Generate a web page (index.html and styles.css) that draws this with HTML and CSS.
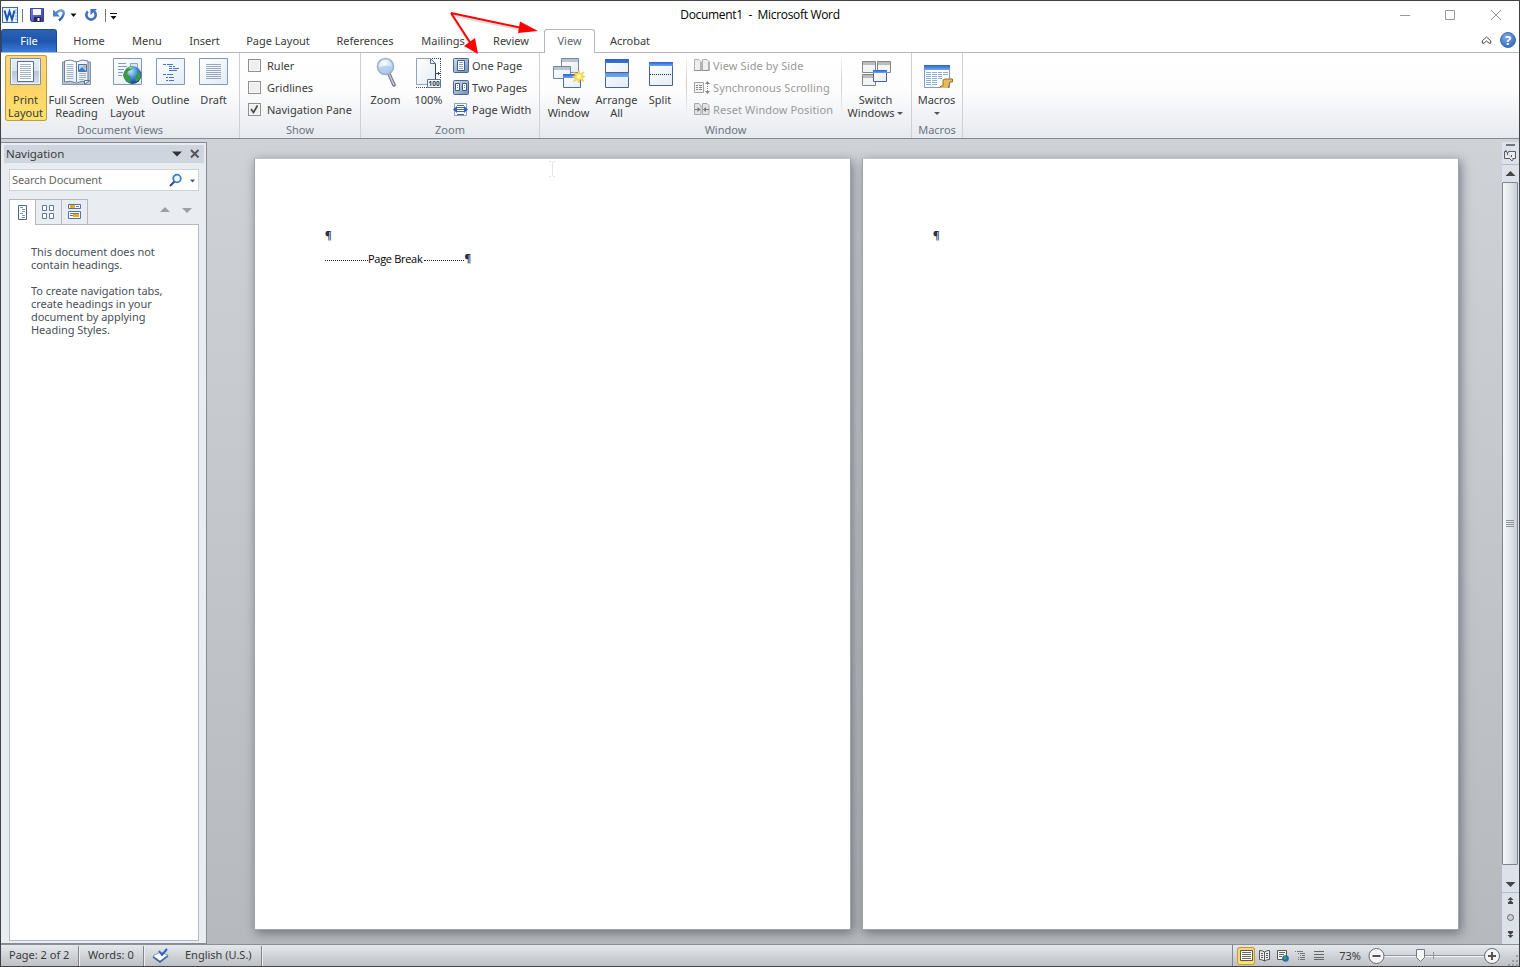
FILE: index.html
```html
<!DOCTYPE html>
<html lang="en">
<head>
    <meta charset="UTF-8">
    <title>Document1 - Microsoft Word</title>
    <link rel="stylesheet" href="styles.css">
</head>
<body>
    <!-- Shared gradients -->
    <svg class="defs" width="0" height="0">
        <defs>
            <linearGradient id="paper" x1="0" y1="0" x2="1" y2="1"><stop offset="0" stop-color="#fff"/><stop offset="1" stop-color="#e3ebf5"/></linearGradient>
            <linearGradient id="blueBar" x1="0" y1="0" x2="0" y2="1"><stop offset="0" stop-color="#2a62c8"/><stop offset="1" stop-color="#6ca4f8"/></linearGradient>
            <linearGradient id="steel" x1="0" y1="0" x2="1" y2="1"><stop offset="0" stop-color="#d3e0f0"/><stop offset="1" stop-color="#6f8fba"/></linearGradient>
            <linearGradient id="side" x1="0" y1="0" x2="0" y2="1"><stop offset="0" stop-color="#e6edf5"/><stop offset=".5" stop-color="#dae3ee"/><stop offset=".5" stop-color="#b9c7d9"/><stop offset="1" stop-color="#d5dfeb"/></linearGradient>
            <linearGradient id="arrowBlue" x1="0" y1="0" x2="0" y2="1"><stop offset="0" stop-color="#6a9be0"/><stop offset="1" stop-color="#2456ae"/></linearGradient>
            <linearGradient id="floppy" x1="0" y1="0" x2="1" y2="1"><stop offset="0" stop-color="#7b86e0"/><stop offset="1" stop-color="#3038a0"/></linearGradient>
            <radialGradient id="globe" cx=".4" cy=".3" r=".7"><stop offset="0" stop-color="#b9e0ff"/><stop offset=".5" stop-color="#4b8fe0"/><stop offset="1" stop-color="#153f8e"/></radialGradient>
            <radialGradient id="lens" cx=".4" cy=".3" r=".7"><stop offset="0" stop-color="#fff"/><stop offset="1" stop-color="#a9cdf0"/></radialGradient>
            <radialGradient id="help" cx=".4" cy=".3" r=".8"><stop offset="0" stop-color="#7fa9e6"/><stop offset="1" stop-color="#2d62b8"/></radialGradient>
        </defs>
    </svg>

    <div class="window">
        <!-- Title bar -->
        <header class="titlebar">
            <div class="quick-access">
                <svg width="120" height="28" viewBox="0 0 120 28">
                    <rect x="1.500" y="6.500" width="15" height="15" fill="#e9f1fb" stroke="#3c6cb0"/>
                    <path d="M14 9h2M14 12h2M14 15h2M14 18h2" stroke="#8aa9d5"/>
                    <path d="M3.500 9.500L6 18.500 8.500 10.500 11 18.500 13.500 9.500" fill="none" stroke="#1b57ab" stroke-width="2"/>
                    <path d="M21.500 8v13M104.500 8v13" stroke="#777"/>
                    <path d="M29.500 7.500h13v13h-12l-1-1z" fill="url(#floppy)" stroke="#3b439f"/>
                    <path d="M32 8h8v6h-8z" fill="#f3f6ff"/><path d="M33 16h7v5h-7z" fill="#23285c"/><path d="M36.500 17h2v3h-2z" fill="#fff"/>
                    <path d="M55 12.500C58 8 64 8.500 62.500 13.500c-.8 3-2.500 4.500-4.500 6" fill="none" stroke="url(#arrowBlue)" stroke-width="2.400"/>
                    <path d="M52 8.500v7h7z" fill="#4a7fd0"/>
                    <path d="M69.500 12.500h6l-3 3.500z" fill="#111"/>
                    <path d="M86.800 10.500a4.700 4.700 0 1 0 6.500 0" fill="none" stroke="#3c6fc4" stroke-width="2.600"/>
                    <path d="M89.500 8h6.500l-6.500 6z" fill="#3c6fc4"/>
                    <path d="M109 12.500h7" stroke="#111"/><path d="M109.500 15h6l-3 3.500z" fill="#111"/>
                </svg>
            </div>
            <div class="title">Document1&nbsp; -&nbsp; Microsoft Word</div>
            <svg class="window-buttons" width="119" height="28" viewBox="0 0 119 28">
                <path d="M0 14.500h10M45.500 9.500h9v9h-9zM91 9l10 10M101 9l-10 10" fill="none" stroke="#999"/>
            </svg>
        </header>

        <!-- Ribbon tabs -->
        <nav class="tabs">
            <div class="tab file">File</div>
            <div class="tab home">Home</div>
            <div class="tab menu">Menu</div>
            <div class="tab insert">Insert</div>
            <div class="tab layout">Page Layout</div>
            <div class="tab references">References</div>
            <div class="tab mailings">Mailings</div>
            <div class="tab review">Review</div>
            <div class="tab active">View</div>
            <div class="tab acrobat">Acrobat</div>
            <svg class="ribbon-help" width="38" height="20" viewBox="0 0 38 20">
                <path d="M1.300 11.800L5.500 8l4.200 3.800v2.400H8L5.500 12 3 14.200H1.300z" fill="#fff" stroke="#444c58"/>
                <circle cx="27" cy="11" r="7.500" fill="url(#help)" stroke="#3c6fbe"/>
                <text x="27" y="15.500" text-anchor="middle" class="help-mark">?</text>
            </svg>
        </nav>

        <!-- Ribbon -->
        <section class="ribbon">
            <div class="group views">
                <div class="group-body">
                    <div class="big selected w42">
                        <svg width="32" height="32" viewBox="0 0 32 32">
                            <path d="M.5 2.500h30v26H.5z" fill="url(#side)" stroke="#7a91b0"/>
                            <path d="M1.500 3.500h28v24h-28z" fill="none" stroke="#f4f8fc"/>
                            <path d="M7.500 5.500h16v20h-16z" fill="#fff" stroke="#55708f"/>
                            <path d="M10 8.500h11M10 10.500h11M10 12.500h11M10 14.500h11M10 16.500h11M10 18.500h11M10 20.500h11M10 22.500h11" stroke="#a3b3c8"/>
                        </svg>
                        <span>Print<br>Layout</span>
                    </div>
                    <div class="big w60">
                        <svg width="32" height="32" viewBox="0 0 32 32">
                            <path d="M1.500 6v22.500h28V6z" fill="#b7c6d8" stroke="#8093ab"/>
                            <path d="M3.500 5q6-2.500 12 1 5.500-3.500 11.500-1v21q-6-2-11.500 1-6-3-12-1z" fill="url(#paper)" stroke="#6b7f99"/>
                            <path d="M15.500 6v20" stroke="#6b7f99"/>
                            <path d="M5.500 8.500h7M5.500 10.500h7M5.500 12.500h7M5.500 14.500h7M5.500 16.500h7M5.500 18.500h7M5.500 20.500h7M5.500 22.500h7M18 17.500h7M18 19.500h7M18 21.500h7M18 23.500h5" stroke="#a3b1c4"/>
                            <path d="M17.500 8.500h8v7h-8z" fill="#b7d8f6" stroke="#4774b4"/><path d="M18 14l3-3 4 4h-7z" fill="#3d79c8"/><circle cx="23.500" cy="10.800" r="1.400" fill="#f7a343"/>
                            <path d="M23.500 28.500v-4h5z" fill="#fff" stroke="#60748d"/>
                        </svg>
                        <span>Full Screen<br>Reading</span>
                    </div>
                    <div class="big w42">
                        <svg width="32" height="32" viewBox="0 0 32 32">
                            <path d="M1.500 2.500h28v26h-28z" fill="url(#paper)" stroke="#8298b5"/>
                            <path d="M6 7.500h8M6 10.500h9M6 13.500h6M6 16.500h5M6 19.500h4" stroke="#7b9fd0"/><path d="M18.500 7.500h7v6h-7z" fill="#d8e6f8" stroke="#8aa6cc"/>
                            <circle cx="20.500" cy="19" r="9" fill="url(#globe)"/>
                            <path d="M14 13q4-4 7-2l-2 3-3 1-1 3 4 3-1 6q-6-2-7-8zM25 14l3 3q2 4-1 7l-3 2-1-4 2-3z" fill="#3a9a3f"/>
                            <path d="M16 12q2-2 5-1l-2 2z" fill="#8fd174"/>
                        </svg>
                        <span>Web<br>Layout</span>
                    </div>
                    <div class="big outline w46">
                        <svg width="32" height="32" viewBox="0 0 32 32">
                            <path d="M1.500 2.500h28v26h-28z" fill="url(#paper)" stroke="#8298b5"/>
                            <path d="M8 8.500h3M12 8.500h6M14 10.500h3M18 10.500h2M14 12.500h3M18 12.500h6M14 14.500h8M8 18.500h3M12 18.500h6M11 21.500h2M14 21.500h5M11 24.500h2M14 24.500h5" stroke="#4876b8"/>
                        </svg>
                        <span>Outline</span>
                    </div>
                    <div class="big w40">
                        <svg width="32" height="32" viewBox="0 0 32 32">
                            <path d="M1.500 2.500h28v26h-28z" fill="url(#paper)" stroke="#8298b5"/>
                            <path d="M8 8.500h15M8 10.500h15M8 12.500h15M8 14.500h15M8 16.500h15M8 18.500h15M8 20.500h15M8 22.500h15" stroke="#9aa8bd"/>
                        </svg>
                        <span>Draft</span>
                    </div>
                </div>
                <div class="group-title">Document Views</div>
            </div>

            <div class="group show">
                <div class="group-body stack">
                    <div class="small"><i class="check"></i>Ruler</div>
                    <div class="small"><i class="check"></i>Gridlines</div>
                    <div class="small"><i class="check"><svg width="11" height="11" viewBox="0 0 11 11"><path d="M2 5l2.500 3.500L8.500 1.500" fill="none" stroke="#454545" stroke-width="1.600"/></svg></i>Navigation Pane</div>
                </div>
                <div class="group-title">Show</div>
            </div>

            <div class="group zoom">
                <div class="group-body">
                    <div class="big w46">
                        <svg width="32" height="32" viewBox="0 0 32 32">
                            <path d="M19 18l5 11" stroke="#747a83" stroke-width="3.600" stroke-linecap="round"/><path d="M19 18l5 11" stroke="#c4cad2" stroke-width="1.500"/>
                            <circle cx="15.500" cy="10.500" r="8" fill="url(#lens)" stroke="#9fb0c5" stroke-width="1.600"/>
                            <path d="M9 12q6-4 13-1-1 6-6.500 6T9 12z" fill="#9cc4ee" opacity=".6"/>
                        </svg>
                        <span>Zoom</span>
                    </div>
                    <div class="big hundred w40">
                        <svg width="32" height="32" viewBox="0 0 32 32">
                            <path d="M20 2.500h9M28.500 3v20M4 31.500h12" fill="none" stroke="#344863" stroke-dasharray="1 1"/>
                            <path d="M4.500 2.500h14l5 5v21h-19z" fill="url(#paper)" stroke="#8da5c2"/><path d="M18.500 2.500v5h5z" fill="#e8eff7" stroke="#5a7190"/>
                            <path d="M23.500 8v15M24 17.500h4M26.500 16v3" stroke="#344863"/>
                            <path d="M15.500 23.500h13v8h-13z" fill="#f3f6fa" stroke="#60758f"/><text x="22.200" y="30" text-anchor="middle" class="tiny">100</text>
                        </svg>
                        <span>100%</span>
                    </div>
                    <div class="stack smalls">
                        <div class="small"><svg width="16" height="16" viewBox="0 0 16 16"><rect x=".5" y=".5" width="15" height="14" rx="1" fill="url(#steel)" stroke="#476792"/><path d="M4.500 2.500h7v10h-7z" fill="#fff" stroke="#405b80"/><path d="M6 4.500h4M6 6.500h4M6 8.500h4M6 10.500h4" stroke="#8ba1c0"/></svg>One Page</div>
                        <div class="small"><svg width="16" height="16" viewBox="0 0 16 16"><rect x=".5" y=".5" width="15" height="14" rx="1" fill="url(#steel)" stroke="#476792"/><path d="M2.500 3.500h4v7h-4zM9.500 3.500h4v7h-4z" fill="#fff" stroke="#405b80"/><path d="M4 5.500h1M4 7.500h1M11 5.500h1M11 7.500h1" stroke="#6d87ab"/></svg>Two Pages</div>
                        <div class="small"><svg width="16" height="16" viewBox="0 0 16 16"><path d="M1.500 1.500h12v12h-12z" fill="#f5f8fc" stroke="#8da0ba"/><path d="M4 3.500h7M4 12.500h7" stroke="#51688a"/><path d="M4 5.500h7M4 7.500h7M4 9.500h7" stroke="#51688a"/><path d="M0 7.500L4 4v7zM15 7.500L11 4v7z" fill="#2e64c0"/></svg>Page Width</div>
                    </div>
                </div>
                <div class="group-title">Zoom</div>
            </div>

            <div class="group win">
                <div class="group-body">
                    <div class="big w50">
                        <svg width="32" height="32" viewBox="0 0 32 32">
                            <path d="M8.500 2.500h17v14h-17z" fill="url(#paper)" stroke="#7486a0"/><path d="M9 3h16v3H9z" fill="#b7c2d3"/>
                            <path d="M.5 10.500h17v12H.5z" fill="url(#paper)" stroke="#7486a0"/><path d="M1 11h16v3H1z" fill="#b7c2d3"/>
                            <path d="M10.500 18.500h17v13h-17z" fill="url(#paper)" stroke="#526c93"/><path d="M10 18h18v4H10z" fill="url(#blueBar)"/>
                            <path d="M26 14l1 4 4-2-2 3.500 3 1-3 1.500 2 3.500-4-2-1 3.500-1.500-3.500-4 2 2-3.500-3.500-1.500 3.500-1-2-3.500 4 2z" fill="#ffe14a" stroke="#f1bb35" stroke-width=".6"/><circle cx="26" cy="20.500" r="2" fill="#fffbd8"/>
                        </svg>
                        <span>New<br>Window</span>
                    </div>
                    <div class="big w46">
                        <svg width="32" height="32" viewBox="0 0 32 32">
                            <path d="M4.500 3.500h23v28h-23z" fill="url(#paper)" stroke="#4b6386"/><path d="M4 16.500h24" stroke="#4b6386"/>
                            <path d="M4 3h24v4H4zM4 17h24v4H4z" fill="url(#blueBar)"/>
                        </svg>
                        <span>Arrange<br>All</span>
                    </div>
                    <div class="big split w43">
                        <svg width="32" height="32" viewBox="0 0 32 32">
                            <path d="M4.500 6.500h23v23h-23z" fill="url(#paper)" stroke="#4b6386"/><path d="M4 6h24v4H4z" fill="url(#blueBar)"/>
                            <path d="M5 18.500h22" stroke="#222c3a" stroke-dasharray="1 1"/>
                        </svg>
                        <span>Split</span>
                    </div>
                    <div class="divider"></div>
                    <div class="stack smalls disabled">
                        <div class="small"><svg width="16" height="16" viewBox="0 0 16 16"><path d="M.5 1.500H5l2 2v9H.5zM8.500 1.500H13l2 2v9H8.500z" fill="#eee" stroke="#b0b0b0"/><path d="M7 4v9M15 4v9M0 12.500h7M8 12.500h7" stroke="#8f8f8f"/></svg>View Side by Side</div>
                        <div class="small"><svg width="16" height="16" viewBox="0 0 16 16"><path d="M.5 2.500h9v10h-9z" fill="#f1f1f1" stroke="#a3a3a3"/><path d="M2 5.500h2M5 5.500h3M2 7.500h2M5 7.500h3M2 9.500h2M5 9.500h3" stroke="#888"/><path d="M13.500 4v8" stroke="#888" stroke-dasharray="1 1"/><path d="M11 4l2.500-3L16 4zM11 11l2.500 3 2.500-3z" fill="#888"/></svg>Synchronous Scrolling</div>
                        <div class="small"><svg width="16" height="16" viewBox="0 0 16 16"><path d="M.5 1.500H5l2 2v9H.5zM8.500 1.500H13l2 2v9H8.500z" fill="#e4e4e4" stroke="#a8a8a8"/><path d="M1 7.500h5M10 7.500h5" stroke="#777"/><path d="M3.500 5l3 2.500-3 2.500zM12 5L9 7.500l3 2.500z" fill="#777"/></svg>Reset Window Position</div>
                    </div>
                    <div class="divider second"></div>
                    <div class="big w68">
                        <svg width="32" height="32" viewBox="0 0 32 32">
                            <path d="M2.500 5.500h13v11h-13zM17.500 5.500h13v11h-13zM2.500 18.500h13v11h-13z" fill="#f3f4f5" stroke="#858585"/>
                            <path d="M3 6h12v3H3zM18 6h12v3H18zM3 19h12v3H3z" fill="#bbb"/>
                            <path d="M13.500 14.500h13v11h-13z" fill="url(#paper)" stroke="#4b6386"/><path d="M13 14h14v3H13z" fill="url(#blueBar)"/>
                        </svg>
                        <span>Switch<br>Windows <b class="caret"></b></span>
                    </div>
                </div>
                <div class="group-title">Window</div>
            </div>

            <div class="group macros">
                <div class="group-body">
                    <div class="big w46">
                        <svg width="32" height="32" viewBox="0 0 32 32">
                            <path d="M3.500 9.500h25v22h-25z" fill="#fff" stroke="#7d9cc9"/><path d="M3 9h26v5H3z" fill="url(#blueBar)"/>
                            <path d="M5 16.500h5M11 16.500h5M17 16.500h4M22 16.500h5M5 18.500h5M11 18.500h5M17 18.500h4M22 18.500h5M5 20.500h5M11 20.500h5M17 20.500h4M5 22.500h5M11 22.500h5M17 22.500h4M5 24.500h5M11 24.500h5M5 26.500h5M11 26.500h5M5 28.500h5M11 28.500h5" stroke="#8cadda"/>
                            <path d="M22 25q0-2 2-2h7.500v3h-2.500l-2 7h-8q-1-2 1-3h2z" fill="#e6b95a" stroke="#94712b"/>
                        </svg>
                        <span>Macros<br><b class="caret"></b></span>
                    </div>
                </div>
                <div class="group-title">Macros</div>
            </div>
        </section>

        <!-- Work area -->
        <main class="workspace">
            <aside class="navigation">
                <div class="nav-title">
                    <span>Navigation</span>
                    <svg width="31" height="18" viewBox="0 0 31 18"><path d="M1 6.500h10l-5 5z" fill="#333"/><path d="M20 5l7.500 7.500M27.500 5L20 12.500" stroke="#555" stroke-width="2"/></svg>
                </div>
                <div class="search">
                    <span>Search Document</span>
                    <svg width="30" height="19" viewBox="0 0 30 19"><path d="M2 15l5-5" stroke="#2c4d94" stroke-width="2.200"/><circle cx="9" cy="7.500" r="3.800" fill="#eff8ff" stroke="#3980c8" stroke-width="1.800"/><path d="M22 8.500h5l-2.500 3z" fill="#555"/></svg>
                </div>
                <div class="nav-tabs">
                    <div class="nav-tab current"><svg width="16" height="16" viewBox="0 0 16 16"><path d="M4.500 .5h8v14h-8z" fill="#fff" stroke="#4d678b"/><path d="M6 2.500h3M8 4.500h3M8 6.500h3M6 8.500h3M8 10.500h3M8 12.500h3" stroke="#8095b3"/></svg></div>
                    <div class="nav-tab"><svg width="16" height="16" viewBox="0 0 16 16"><path d="M2.500 1.500h4v5h-4zM9.500 1.500h4v5h-4zM2.500 9.500h4v5h-4zM9.500 9.500h4v5h-4z" fill="#fff" stroke="#5f779b"/></svg></div>
                    <div class="nav-tab"><svg width="16" height="16" viewBox="0 0 16 16"><path d="M2.500 .5h12v4h-12zM2.500 7.500h12v7h-12z" fill="#fff" stroke="#5171a8"/><path d="M4 1h5v3H4zM7 10h6v3H7z" fill="#efaa16"/><path d="M10 2.500h3M4 9.500h9M4 11.500h3" stroke="#5c7ba7"/></svg></div>
                    <svg class="nav-arrows" width="34" height="12" viewBox="0 0 34 12"><path d="M1 8h10L6 3zM23 4h10l-5 5z" fill="#9da0a4"/></svg>
                </div>
                <div class="nav-panel">
                    <p>This document does not<br>contain headings.</p>
                    <p>To create navigation tabs,<br>create headings in your<br>document by applying<br>Heading Styles.</p>
                </div>
            </aside>

            <div class="pages">
                <article class="page">
                    <div class="para">¶</div>
                    <div class="para break"><i class="dots"></i><span>Page Break</span><i class="dots second"></i><span class="mark">¶</span></div>
                    <svg class="ibeam" width="7" height="16" viewBox="0 0 7 16"><path d="M0 .5h2M4 .5h2M3.500 1v14M0 15.500h2M4 15.500h2" stroke="#e6e6e6"/></svg>
                </article>
                <article class="page">
                    <div class="para">¶</div>
                </article>
            </div>

            <div class="scrollbar">
                <div class="ruler-toggle"><svg width="16" height="22" viewBox="0 0 16 22"><path d="M4 2h9v2H4z" fill="#70757d"/><path d="M2.500 9.500h2M6.500 9.500h7v7h-3M8 16.500H2.500v-7" fill="#eee9ed" stroke="#555b64"/><path d="M3.500 8l2 3 2-2M8 17l2 2 2-3M5.500 11v2M9.500 13v2" fill="none" stroke="#555b64"/></svg></div>
                <div class="sb-arrow"><svg width="16" height="16" viewBox="0 0 16 16"><path d="M3.500 11h10L8.500 6z" fill="#464646"/></svg></div>
                <div class="thumb"><i></i><i></i><i></i><i></i></div>
                <div class="sb-arrow down"><svg width="16" height="16" viewBox="0 0 16 16"><path d="M3.500 6h10l-5 5z" fill="#464646"/></svg></div>
                <div class="browse"><svg width="16" height="50" viewBox="0 0 16 50"><path d="M5.500 7l3-3 3 3zM5.500 10l3-3 3 3zM6 10h5v1H6zM5.500 39h6l-3 3zM5.500 42h6l-3 3zM6 38h5v1H6z" fill="#444"/><circle cx="8.500" cy="24.500" r="3" fill="#ced0d4" stroke="#666"/></svg></div>
            </div>
        </main>

        <!-- Status bar -->
        <footer class="status">
            <div class="cell page-no">Page: 2 of 2</div>
            <div class="cell words">Words: 0</div>
            <div class="cell proof"><svg width="18" height="17" viewBox="0 0 18 17"><path d="M1 9l7-4 8 3-8 6z" fill="#fff" stroke="#8a9cc0"/><path d="M1 10l7 5 8-6" fill="none" stroke="#3e62ac" stroke-width="1.500"/><path d="M7 4l3 4 5-6" fill="none" stroke="#2d61c8" stroke-width="2"/></svg></div>
            <div class="cell language">English (U.S.)</div>
            <div class="status-right">
                <div class="view selected"><svg width="13" height="13" viewBox="0 0 13 13"><path d="M.5 1.500h12v10H.5z" fill="#fff" stroke="#555"/><path d="M2 3.500h9M2 5.500h9M2 7.500h9M2 9.500h9" stroke="#666"/></svg></div>
                <div class="view"><svg width="13" height="13" viewBox="0 0 13 13"><path d="M1.500 1.500q3 0 5 1.500 2-1.500 5-1.500v9q-3 0-5 1.500-2-1.500-5-1.500z" fill="#eee" stroke="#555"/><path d="M6.500 3v9M3 4.500h2M3 6.500h2M3 8.500h2M8 4.500h2M8 6.500h2M8 8.500h2" stroke="#555"/></svg></div>
                <div class="view"><svg width="13" height="13" viewBox="0 0 13 13"><path d="M1.500 1.500h9v9h-9z" fill="#f5f5f5" stroke="#555"/><path d="M3 3.500h6M3 5.500h5M3 7.500h3" stroke="#666"/><circle cx="9.500" cy="9.500" r="3.300" fill="#276aa9"/><path d="M8 8l2-1v3l-2 1z" fill="#49a553"/></svg></div>
                <div class="view"><svg width="13" height="13" viewBox="0 0 13 13"><path d="M1 2.500h1M3 2.500h6M4 4.500h1M6 4.500h5M6 6.500h1M8 6.500h3M4 8.500h1M6 8.500h5M4 10.500h1M6 10.500h5" stroke="#777"/></svg></div>
                <div class="view"><svg width="13" height="13" viewBox="0 0 13 13"><path d="M2 2.500h10M2 5.500h10M2 8.500h10M2 10.500h10" stroke="#666"/></svg></div>
                <div class="percent">73%</div>
                <svg class="zoom-slider" width="151" height="22" viewBox="0 0 151 22">
                    <path d="M16 10.500h101" stroke="#9298a1"/><path d="M16 11.500h101" stroke="#f3f4f5"/><path d="M65.500 7v7" stroke="#9298a1"/>
                    <circle cx="8.500" cy="11" r="7.500" fill="#f4f4f5" stroke="#666c74"/><path d="M4.500 11h8" stroke="#555" stroke-width="2"/>
                    <path d="M48.500 4.500h8v8l-4 4-4-4z" fill="#f8f8f8" stroke="#737982"/>
                    <circle cx="124" cy="11" r="7.500" fill="#f4f4f5" stroke="#666c74"/><path d="M120 11h8M124 7v8" stroke="#555" stroke-width="2"/>
                    <path d="M148 10h2v2h-2zM144 15h2v2h-2zM148 15h2v2h-2zM140 19h2v2h-2zM144 19h2v2h-2zM148 19h2v2h-2z" fill="#989da4"/>
                </svg>
            </div>
        </footer>
    </div>

    <!-- Callout arrows drawn over the ribbon -->
    <svg class="callout" width="100" height="52" viewBox="0 0 100 52">
        <path d="M6 6l72 15M6 6l21 33" stroke="#777" stroke-width="3" opacity=".25"/>
        <path d="M5 4l71 15M5 4l22 34" fill="none" stroke="#f00" stroke-width="2"/>
        <path d="M74 12.500l18 9.500-20 2zM18 37l11-8 3 16z" fill="#f00"/>
    </svg>
</body>
</html>
```
FILE: styles.css
```css
body {
    margin: 0;
    background: #414043;
    font-family: "Noto Sans", "Open Sans", sans-serif;
    font-size: 11px;
    color: #3b3b3b;
    width: 1520px;
    height: 967px;
    overflow: hidden;
}
svg {
    display: block;
    flex: none;
}
.defs {
    position: absolute;
}
.window {
    box-sizing: border-box;
    height: 967px;
    padding: 1px;
    display: flex;
    flex-direction: column;
    white-space: nowrap;
}

/* Title bar */
.titlebar {
    height: 28px;
    background: #fff;
    display: flex;
    align-items: center;
}
.quick-access {
    width: 400px;
}
.title {
    flex: 1;
    text-align: center;
    font-family: "Open Sans", sans-serif;
    font-size: 12px;
    color: #000;
    letter-spacing: -0.32px;
    padding-bottom: 2px;
}
.window-buttons {
    margin-left: 281px;
}

/* Tabs */
.tabs {
    height: 24px;
    background: linear-gradient(#b3b8be, #b3b8be) bottom / 100% 1px no-repeat #fff;
    display: flex;
}
.tab {
    box-sizing: border-box;
    text-align: center;
    line-height: 24px;
    height: 24px;
}
.file {
    width: 56px;
    margin-right: 3px;
    height: 23px;
    color: #fff;
    background: linear-gradient(#2c62b5, #1f55ab 50%, #3a7bdc);
    border: 1px solid #1c4a97;
    border-bottom: 0;
    border-radius: 3px 3px 0 0;
    line-height: 22px;
}
.home, .menu {
    width: 58px;
}
.insert {
    width: 57px;
}
.layout {
    width: 90px;
}
.references {
    width: 84px;
}
.mailings {
    width: 72px;
}
.review {
    width: 64px;
}
.active {
    width: 51px;
    margin-left: 1px;
    border: 1px solid #b3b8be;
    border-bottom: 0;
    border-radius: 3px 3px 0 0;
    background: #fff;
    line-height: 22px;
    color: #5c6470;
}
.acrobat {
    width: 70px;
}
.ribbon-help {
    margin-left: auto;
}
.help-mark {
    font-size: 13px;
    font-weight: bold;
    fill: #fff;
}

/* Ribbon */
.ribbon {
    box-sizing: border-box;
    height: 86px;
    display: flex;
    background: linear-gradient(#fff, #fdfdfe 45%, #e6e9ee);
    border-bottom: 1px solid #868b93;
}
.group {
    box-sizing: border-box;
    display: flex;
    flex-direction: column;
    border-right: 1px solid #cdd1d7;
}
.group-body {
    height: 69px;
    display: flex;
    padding-top: 2px;
    box-sizing: border-box;
}
.group-title {
    line-height: 16px;
    text-align: center;
    color: #6c7482;
}
.views {
    width: 239px;
}
.views .group-body {
    padding-left: 4px;
}
.show {
    width: 121px;
}
.zoom {
    width: 179px;
}
.zoom .group-body {
    padding-left: 2px;
}
.win {
    width: 372px;
}
.win .group-body {
    padding-left: 4px;
}
.macros {
    width: 51px;
}
.macros .group-body {
    padding-left: 2px;
}
.big {
    box-sizing: border-box;
    height: 66px;
    display: flex;
    flex-direction: column;
    align-items: center;
    text-align: center;
    line-height: 13px;
    padding-top: 1px;
}
.big span {
    margin-top: 5px;
    padding-right: 1px;
}
.selected {
    background: linear-gradient(#fcd77a, #fdd365 50%, #ffe36f);
    box-shadow: inset 0 0 0 1px #c29b45;
    border-radius: 3px;
}
.outline, .split {
    margin-left: -1px;
}
.w40 { width: 40px; }
.w42 { width: 42px; }
.w43 { width: 43px; }
.w46 { width: 46px; }
.w50 { width: 50px; }
.w60 { width: 60px; }
.w68 { width: 68px; }
.hundred svg {
    margin-left: -2px;
}
.tiny {
    font-size: 6.5px;
    font-weight: bold;
    fill: #2b3b55;
}
.stack {
    display: flex;
    flex-direction: column;
}
.small {
    box-sizing: border-box;
    height: 22px;
    padding-bottom: 2px;
    display: flex;
    align-items: center;
    gap: 3px;
}
.small > svg {
    margin-top: 2px;
}
.show .small {
    gap: 6px;
    padding-left: 8px;
}
.smalls {
    padding-left: 4px;
}
.disabled {
    padding-left: 7px;
    width: 147px;
    color: #999;
    letter-spacing: 0.12px;
}
.check {
    box-sizing: border-box;
    width: 13px;
    height: 13px;
    border: 1px solid #8e8f8f;
    background: #eee;
    box-shadow: inset 0 0 0 1px #f8f8f8;
}
.divider {
    width: 1px;
    height: 60px;
    margin-left: 4px;
    background: linear-gradient(#f6f7f8, #ccd0d6, #f0f1f3);
}
.divider.second {
    margin-left: 0;
}
.caret {
    display: inline-block;
    border: 3px solid transparent;
    border-top-color: #555;
    border-bottom: 0;
    vertical-align: 2px;
}

/* Work area */
.workspace {
    height: 805px;
    display: flex;
    background: linear-gradient(#cfd2d7, #b6b9be);
}
.navigation {
    box-sizing: border-box;
    width: 206px;
    margin-top: 3px;
    padding: 2px 2px 2px 3px;
    background: #e9ecf1;
    border: 1px solid #868b93;
    border-left: 0;
}
.nav-title {
    height: 18px;
    display: flex;
    justify-content: space-between;
    align-items: center;
    padding: 0 2px;
    background: #ced5de;
    line-height: 18px;
    font-size: 11.5px;
    letter-spacing: -0.05px;
}
.search {
    box-sizing: border-box;
    width: 190px;
    height: 22px;
    margin: 6px 0 8px 5px;
    padding-left: 2px;
    display: flex;
    justify-content: space-between;
    align-items: center;
    background: #fff;
    border: 1px solid #cfd3d8;
    color: #666;
    letter-spacing: -0.12px;
}
.search span {
    padding-bottom: 2px;
}
.nav-tabs {
    display: flex;
    height: 25px;
    margin-left: 5px;
}
.nav-tab {
    box-sizing: border-box;
    width: 26px;
    height: 26px;
    padding-right: 2px;
    display: flex;
    align-items: center;
    justify-content: center;
    border: 1px solid #b4b8be;
    border-left: 0;
}
.nav-tab.current {
    width: 27px;
    border-left: 1px solid #b4b8be;
    border-bottom: 0;
    background: #fff;
    z-index: 1;
}
.nav-arrows {
    margin: 5px 0 0 71px;
}
.nav-panel {
    box-sizing: border-box;
    width: 190px;
    height: 717px;
    margin-left: 5px;
    padding: 20px 21px;
    background: #fff;
    border: 1px solid #b4b8be;
    line-height: 13px;
    color: #4a4f58;
}
.nav-panel p {
    margin: 0 0 13px;
    letter-spacing: -0.04px;
}
.pages {
    flex: 1;
    display: flex;
    gap: 11px;
    padding: 19px 0 0 47px;
}
.page {
    position: relative;
    box-sizing: border-box;
    width: 597px;
    height: 772px;
    padding: 65px 70px;
    background: #fff;
    border: 1px solid #a0a5ad;
    border-top-color: #c2c5ca;
    box-shadow: 2px 3px 10px rgba(50, 55, 60, 0.55);
}
.para {
    height: 23px;
    line-height: 23px;
    font-family: "Open Sans", sans-serif;
    font-size: 11px;
    color: #000;
    display: flex;
}
.para:first-child, .mark {
    font-size: 10px;
    font-weight: bold;
    color: #1c3350;
}
.break {
    letter-spacing: -0.3px;
}
.dots {
    width: 43px;
    height: 13px;
    border-bottom: 1px dotted #222;
}
.dots.second {
    width: 40px;
    margin-left: 2px;
}
.ibeam {
    position: absolute;
    left: 294px;
    top: 2px;
}
.scrollbar {
    width: 17px;
    margin-top: 3px;
    background: #dce1ea;
    display: flex;
    flex-direction: column;
}
.ruler-toggle {
    height: 22px;
    border-bottom: 1px solid #b5bac3;
}
.sb-arrow {
    height: 17px;
}
.thumb {
    box-sizing: border-box;
    height: 683px;
    width: 16px;
    border: 1px solid #7e8590;
    border-radius: 1px;
    background: linear-gradient(90deg, #f7f8fa, #dfe3e9 60%, #c6ccd5);
    display: flex;
    flex-direction: column;
    align-items: center;
    justify-content: center;
    gap: 1px;
}
.thumb i {
    width: 8px;
    height: 1px;
    background: #8a9099;
}
.down {
    height: 27px;
    display: flex;
    align-items: flex-end;
    border-bottom: 1px solid #b5bac3;
}

/* Status bar */
.status {
    box-sizing: border-box;
    height: 22px;
    display: flex;
    align-items: center;
    background: linear-gradient(#e6e9ec, #ced1d5 55%, #bec2c7);
    border-top: 1px solid #8a8f96;
    line-height: 18px;
}
.cell {
    box-sizing: border-box;
    height: 20px;
    border-right: 1px solid #81868e;
    box-shadow: 1px 0 #eee;
    padding-left: 8px;
}
.page-no {
    width: 78px;
}
.words {
    width: 65px;
    padding-left: 9px;
    letter-spacing: 0.1px;
}
.proof {
    width: 30px;
    border: 0;
    box-shadow: none;
    padding-top: 1px;
}
.language {
    width: 88px;
    padding-left: 11px;
}
.status-right {
    margin-left: auto;
    height: 21px;
    display: flex;
    align-items: center;
    border-left: 1px solid #81868e;
    padding-left: 4px;
}
.view {
    width: 18px;
    height: 18px;
    display: flex;
    align-items: center;
    justify-content: center;
}
.percent {
    margin: 0 7px 0 12px;
}

/* Callout */
.callout {
    position: absolute;
    left: 446px;
    top: 9px;
}
```
